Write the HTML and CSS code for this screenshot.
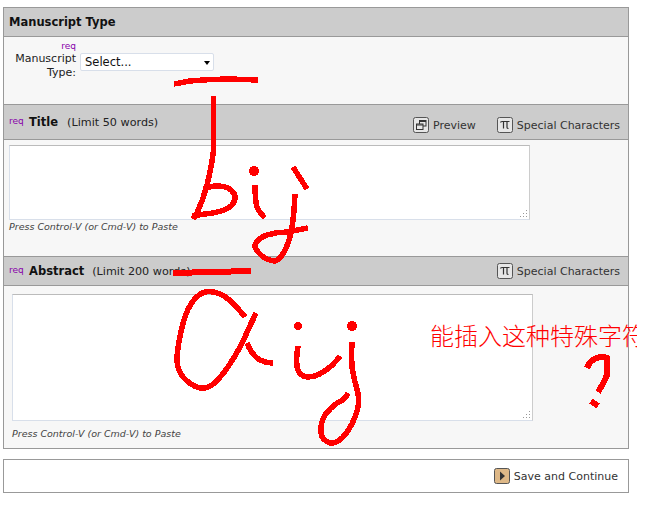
FILE: index.html
```html
<!DOCTYPE html>
<html lang="en">

<head>
    <meta charset="UTF-8">
    <meta name="viewport" content="width=device-width, initial-scale=1.0">
    <title>Manuscript Details</title>
    <link rel="stylesheet" href="styles.css">
</head>

<body>
    <div class="panel">
        <div class="head head-type">
            <span class="head-title">Manuscript Type</span>
        </div>
        <div class="type-body">
            <div class="type-label">
                <span class="req">req</span>
                <label for="ms-type">Manuscript Type:</label>
            </div>
            <div class="select-wrap">
                <select id="ms-type">
                    <option>Select...</option>
                </select>
            </div>
        </div>

        <div class="head head-title-row">
            <span class="req req-inline">req</span>
            <span class="head-title">Title</span>
            <span class="limit">(Limit 50 words)</span>
            <div class="tools tools-low">
                <a class="tool">
                    <svg class="icon" viewBox="0 0 16 16">
                        <rect x="0.5" y="0.5" width="15" height="15" rx="2" fill="#e6e6e6" stroke="#555" />
                        <rect x="6.5" y="3.5" width="6.5" height="5.5" fill="none" stroke="#333" />
                        <rect x="3.5" y="7" width="6.5" height="5.5" fill="#e6e6e6" stroke="#333" />
                        <path d="M6.500 4.500h6.500M3.500 8h6.500" stroke="#333" />
                    </svg>
                    Preview
                </a>
                <a class="tool">
                    <svg class="icon" viewBox="0 0 16 16">
                        <rect x="0.5" y="0.5" width="15" height="15" rx="2" fill="#e6e6e6" stroke="#555" />
                        <path d="M3.500 5.500q0-1 1.500-1h7.500M6.500 4.500v7M10 4.500v6q0 1 1.500 1" fill="none" stroke="#333" stroke-width="1.200" />
                    </svg>
                    Special Characters
                </a>
            </div>
        </div>
        <div class="field field-title">
            <div class="box-wrap box-title">
                <textarea class="box"></textarea>
                <svg class="grip" viewBox="0 0 9 9">
                    <path d="M7 1h1v1H7zM4 4h1v1H4zM7 4h1v1H7zM1 7h1v1H1zM4 7h1v1H4zM7 7h1v1H7z" fill="#999" />
                </svg>
            </div>
            <div class="hint">Press Control-V (or Cmd-V) to Paste</div>
        </div>

        <div class="head head-abstract">
            <span class="req req-inline">req</span>
            <span class="head-title">Abstract</span>
            <span class="limit">(Limit 200 words)</span>
            <div class="tools">
                <a class="tool">
                    <svg class="icon" viewBox="0 0 16 16">
                        <rect x="0.5" y="0.5" width="15" height="15" rx="2" fill="#e6e6e6" stroke="#555" />
                        <path d="M3.500 5.500q0-1 1.500-1h7.500M6.500 4.500v7M10 4.500v6q0 1 1.500 1" fill="none" stroke="#333" stroke-width="1.200" />
                    </svg>
                    Special Characters
                </a>
            </div>
        </div>
        <div class="field field-abstract">
            <div class="box-wrap box-abstract">
                <textarea class="box"></textarea>
                <svg class="grip" viewBox="0 0 9 9">
                    <path d="M7 1h1v1H7zM4 4h1v1H4zM7 4h1v1H7zM1 7h1v1H1zM4 7h1v1H4zM7 7h1v1H7z" fill="#999" />
                </svg>
            </div>
            <div class="hint">Press Control-V (or Cmd-V) to Paste</div>
        </div>
    </div>

    <div class="footer">
        <a class="tool">
            <svg class="icon" viewBox="0 0 16 16">
                <rect x="0.5" y="0.5" width="15" height="15" rx="2" fill="#deb887" stroke="#555" />
                <path d="M6 3.500l5 4.500-5 4.500z" fill="#333" />
            </svg>
            Save and Continue
        </a>
    </div>

    <!-- red marks drawn on top of the form -->
    <svg class="scribble" viewBox="0 0 645 505" shape-rendering="crispEdges">
        <g fill="none" stroke="#f00" stroke-width="5.500" stroke-linejoin="round">
            <path d="M174 84L190 81Q210 79 230 79L258 80" />
            <path d="M213.500 96V150Q212 165 207 185Q203 200 197 213L193 219" />
            <path d="M192 216Q205 214 213 213Q228 210 232 205Q238 197 232 191Q228 186 217 186Q210 186 204 189" />
            <path d="M255 185Q255 200 257 207Q259 212 265 218" />
            <path d="M293 167L307 189" />
            <path d="M295 194Q294 215 292 227Q290 240 285 250Q280 260 275 261Q265 260 260 254Q254 248 255 245Q258 238 267 235Q277 232 287 232Q298 230 308 228" />
            <path d="M173 273L251 271" stroke-width="6" />
            <path d="M245 317Q230 298 220 294Q210 290 203.500 292.500Q197 295 191 304Q185 313 181 331.500Q177 350 177 360Q177 370 183.500 377.500Q190 385 198.500 387.500Q207 390 215 382.500Q223 375 231.500 361.500Q240 348 244 339Q248 330 256 313" />
            <path d="M247 343Q251 353 257 358Q264 363 273 363" />
            <path d="M298 346Q296 358 297 367Q299 376 307 377Q316 377 323 372Q333 366 340 356" />
            <path d="M352 342Q351 355 352 367Q354 380 358 393Q360 405 355 417Q350 430 342 438Q335 444 330 443Q322 440 321 433Q320 423 325 415Q330 408 337 403Q345 400 348 393" />
            <path d="M587 368Q590 360 597 358Q603 356 607 358Q608 368 607 375Q603 385 598 392" stroke-width="6" />
            <path d="M591 401L598 406" stroke-width="6" />
        </g>
        <g fill="#f00">
            <circle cx="254" cy="171" r="5" />
            <circle cx="298" cy="326" r="4" />
            <circle cx="352" cy="326" r="5" />
        </g>
    </svg>
    <div class="note">能插入这种特殊字符</div>
</body>

</html>
```

FILE: styles.css
```css
* {
    margin: 0;
    padding: 0;
    box-sizing: border-box;
}

body {
    background-color: #fff;
    padding: 7px 0 0 3px;
    font-family: "DejaVu Sans", sans-serif;
    font-size: 11px;
    color: #222;
}

.panel {
    width: 626px;
    border: 1px solid #999;
    background-color: #f7f7f7;
}

.head {
    display: flex;
    align-items: center;
    background-color: #ccc;
    border-bottom: 1px solid #999;
    padding-left: 5px;
}

.head-type {
    height: 29px;
}

.head-title-row {
    height: 36px;
    border-top: 1px solid #999;
}

.head-abstract {
    height: 30px;
    border-top: 1px solid #999;
}

.head-title {
    font-size: 11.500px;
    font-weight: bold;
    color: #111;
}

.limit {
    font-size: 11.200px;
    margin-left: 9px;
}

.head-abstract .limit {
    margin-left: 8px;
}

.req {
    font-size: 9px;
    color: #80a;
}

.req-inline {
    width: 20px;
    margin-top: -3px;
}

.tools {
    display: flex;
    gap: 21px;
    margin-left: auto;
    margin-right: 8px;
}

.tools-low {
    margin-top: 6px;
}

.tool {
    display: flex;
    align-items: center;
    gap: 4px;
    color: #333;
}

.icon {
    width: 16px;
    height: 16px;
}

.type-body {
    display: flex;
    height: 67px;
}

.type-label {
    display: flex;
    flex-direction: column;
    width: 72px;
    text-align: right;
    padding-top: 5px;
}

.type-label .req {
    line-height: 9px;
}

.type-label label {
    line-height: 14px;
    margin-left: 4px;
    margin-top: 1px;
}

.select-wrap {
    position: relative;
    width: 134px;
    height: 18px;
    margin: 16px 0 0 4px;
}

.select-wrap::after {
    content: "";
    position: absolute;
    right: 4px;
    top: 8px;
    border-top: 4px solid #000;
    border-left: 3px solid transparent;
    border-right: 3px solid transparent;
}

.select-wrap select {
    appearance: none;
    width: 100%;
    height: 100%;
    border: 1px solid #d8dfea;
    border-radius: 2px;
    background-color: #fff;
    padding-left: 4px;
    font-family: "DejaVu Sans", sans-serif;
    font-size: 11.500px;
    color: #111;
}

.box-wrap {
    position: relative;
    width: 521px;
}

.box {
    display: block;
    width: 100%;
    height: 100%;
    resize: none;
    background-color: #fff;
    border: 1px solid #d8dfea;
    border-top-color: #bbb;
    border-right-color: #ccc;
    outline: none;
}

.grip {
    position: absolute;
    right: 2px;
    bottom: 2px;
    width: 9px;
    height: 9px;
}

.field-title {
    height: 116px;
    padding: 5px 0 0 5px;
}

.box-title {
    height: 75px;
}

.field-abstract {
    height: 162px;
    padding: 8px 0 0 8px;
}

.box-abstract {
    height: 127px;
}

.hint {
    font-size: 9.500px;
    font-style: italic;
    color: #444;
    margin-top: 1px;
    line-height: 12px;
}

.field-abstract .hint {
    margin-top: 7px;
}

.footer {
    display: flex;
    align-items: center;
    justify-content: flex-end;
    width: 626px;
    height: 34px;
    margin-top: 10px;
    border: 1px solid #999;
    background-color: #fff;
    padding-right: 10px;
}

.scribble {
    position: absolute;
    left: 0;
    top: 0;
    width: 645px;
    height: 505px;
    pointer-events: none;
}

.note {
    position: absolute;
    left: 430px;
    top: 320px;
    width: 207px;
    height: 30px;
    overflow: hidden;
    white-space: nowrap;
    font-family: "Noto Sans CJK SC", sans-serif;
    font-size: 24px;
    font-weight: 300;
    line-height: 30px;
    color: #f00;
}
```
